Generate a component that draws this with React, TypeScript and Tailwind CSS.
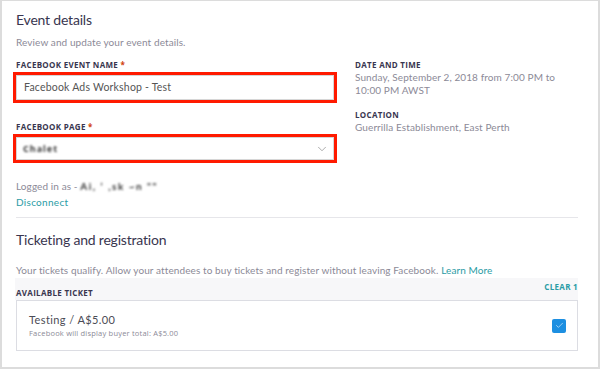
import { ChevronDown, Check } from "lucide-react"

const font = { fontFamily: '"Open Sans", "Liberation Sans", sans-serif' }
const lato = { fontFamily: 'Lato, "Open Sans", sans-serif' }

function Label({ children, required }: { children: string; required?: boolean }) {
  return (
    <div className="text-[8px] leading-[10px] font-bold tracking-[0.3px] text-[#39364f]">
      {children}
      {required && <span className="text-[#d1410c]"> *</span>}
    </div>
  )
}

export default function App() {
  return (
    <div
      style={font}
      className="w-[600px] h-[369px] bg-white border-t border-l-2 border-r-2 border-b-2 border-[#dcdcdc] pl-[14px] pr-[20px] pt-[9px] overflow-hidden"
    >
      <h2 style={lato} className="text-[14px] leading-[20px] text-[#39364f] tracking-[-0.2px]">Event details</h2>
      <p style={lato} className="mt-[5px] text-[10px] leading-[14px] text-[#8c8a97] tracking-[0.1px]">
        Review and update your event details.
      </p>

      <div className="flex gap-[21px]">
        <div className="w-[318px] shrink-0">
          <div className="mt-[11px]">
            <Label required>FACEBOOK EVENT NAME</Label>
          </div>
          <div
            style={lato}
            className="mt-[5px] h-[25px] border border-[#d6d6d6] outline-[3px] outline-[#ff1a00] flex items-center px-[7px] text-[10.5px] tracking-[0.2px] text-[#555]"
          >
            Facebook Ads Workshop - Test
          </div>

          <div className="mt-[22px]">
            <Label required>FACEBOOK PAGE</Label>
          </div>
          <div className="mt-[5px] h-[23px] border border-[#d6d6d6] outline-[3px] outline-[#ff1a00] flex items-center justify-between pl-[6px] pr-[4px]">
            <span className="text-[9px] font-bold text-[#333] blur-[1px] tracking-[1px]">Chalet</span>
            <ChevronDown className="w-[14px] h-[14px] text-[#888]" strokeWidth={1.2} />
          </div>
        </div>

        <div style={lato} className="mt-[11px] text-[10px] leading-[13px] text-[#8c8a97] tracking-[0.1px]">
          <div style={font}>
            <Label>DATE AND TIME</Label>
          </div>
          <div className="mt-[1px] w-[205px]">Sunday, September 2, 2018 from 7:00 PM to 10:00 PM AWST</div>
          <div className="mt-[13px]" style={font}>
            <Label>LOCATION</Label>
          </div>
          <div className="mt-[1px]">Guerrilla Establishment, East Perth</div>
        </div>
      </div>

      <div style={lato} className="mt-[19px] text-[10px] leading-[14px] text-[#8c8a97] tracking-[0.1px]">
        Logged in as -{" "}
        <span className="blur-[1px] text-[#333] font-bold tracking-[1.5px]">Ai, ‘ ,sk ~n ""</span>
      </div>
      <div style={lato} className="mt-[2px] text-[10px] leading-[14px] text-[#2a9ca5] tracking-[0.3px]">
        Disconnect
      </div>

      <div className="mt-[8px] border-t border-[#e6e6ea]" />

      <h2 style={lato} className="mt-[12px] text-[14px] leading-[20px] text-[#39364f] tracking-[-0.2px]">
        Ticketing and registration
      </h2>
      <p style={lato} className="mt-[13px] text-[10px] leading-[14px] text-[#8c8a97] tracking-[0.1px]">
        Your tickets qualify. Allow your attendees to buy tickets and register without leaving Facebook.{" "}
        <span className="text-[#2a9ca5]">Learn More</span>
      </p>

      <div className="mt-[1px] -ml-px h-[22px] bg-[#f7f7f9] flex justify-between pl-px">
        <div className="mt-[10px]">
          <Label>AVAILABLE TICKET</Label>
        </div>
        <div className="mt-[4px] text-[8px] leading-[10px] font-bold tracking-[0.3px] text-[#2a9ca5]">CLEAR 1</div>
      </div>

      <div className="h-[51px] border border-[#dcdde3] flex items-center justify-between pl-[12px] pr-[11px]">
        <div>
          <div style={lato} className="text-[11px] leading-[14px] text-[#4b4b55] tracking-[0.4px]">
            Testing / A$5.00
          </div>
          <div className="mt-[1px] text-[7.5px] leading-[10px] text-[#8c8a97] tracking-[0.2px]">
            Facebook will display buyer total: A$5.00
          </div>
        </div>
        <div className="w-[14px] h-[14px] rounded-[2px] bg-[#1d8fe1] flex items-center justify-center">
          <Check className="w-[9px] h-[9px] text-white" strokeWidth={1.5} />
        </div>
      </div>
    </div>
  )
}
